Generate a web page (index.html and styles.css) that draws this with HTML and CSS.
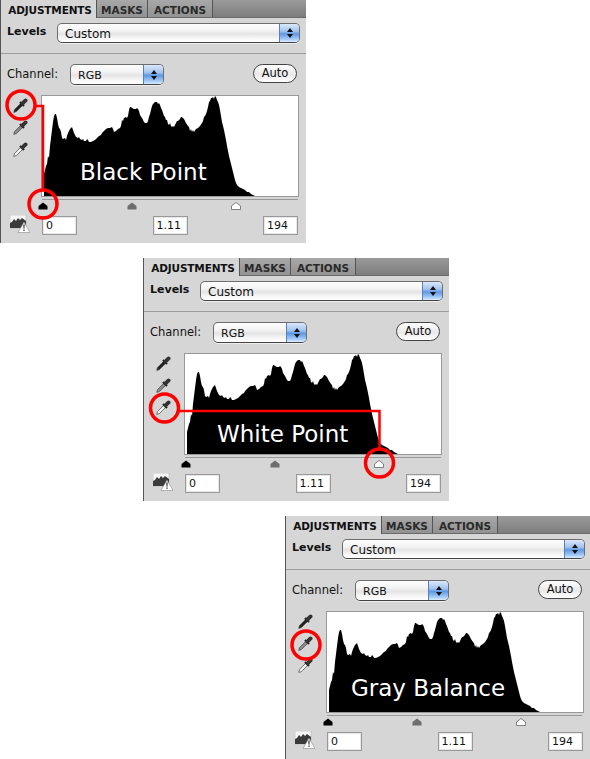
FILE: index.html
```html
<!DOCTYPE html>
<html lang="en">
<head>
<meta charset="utf-8">
<title>Levels</title>
<link rel="stylesheet" href="styles.css">
</head>
<body>
<svg class="defs" width="0" height="0">
  <defs>
    <symbol id="histo" viewBox="0 0 256 100">
      <polygon points="0,100 2,100 2,78 4,70 5,68 6,60 7,62 8,50 9,42 10,34 11,26 12,20 13,18 14,18 15,22 16,28 17,32 18,33 19,36 20,42 21,43 23,42 24,44 25,40 26,37 28,33 30,31 31,34 32,37 34,41 36,42 37,41 38,43 40,44 41,43 42,45 44,45 45,43 46,44 47,46 49,46 51,45 53,44 55,42 57,40 59,39 60,37 62,35 64,33 66,32 68,32 70,31 71,33 72,36 74,35 76,33 78,32 79,30 80,24 81,25 82,22 84,21 85,22 86,20 87,14 88,11 89,11 90,12 92,13 94,13 95,12 96,13 97,15 98,19 100,22 101,24 102,26 103,27 105,27 106,25 107,21 108,18 109,14 110,10 111,8 112,7 113,6 114,6 115,6 116,8 117,7 118,9 119,12 120,14 121,17 122,20 123,21 124,24 125,24 126,28 127,29 128,27 129,30 130,31 131,30 132,31 133,29 134,27 135,25 136,25 137,24 138,23 139,21 140,21 141,22 142,23 143,25 144,27 146,30 147,31 148,35 149,33 150,36 151,34 152,36 154,33 156,32 158,30 160,27 161,25 162,21 163,20 164,18 165,15 166,11 167,6 168,5 169,2 170,2 171,1 172,3 173,0 174,1 175,4 176,6 177,9 178,14 179,20 180,26 181,30 182,34 183,39 184,44 185,50 186,55 187,60 188,64 189,68 190,72 191,76 192,80 193,84 194,87 195,89 197,91 199,92 201,93 203,94 205,96 207,96 209,98 211,99 213,100"/>
    </symbol>
    <symbol id="dropper" viewBox="0 0 15 15">
      <path d="M8.300 4.700L10.300 6.700 3.400 13.600 .8 14.400 1.400 11.700z" fill="currentColor" stroke="#444" stroke-width=".7"/>
      <path d="M7 4L11 8" fill="none" stroke="#222" stroke-width="2.200"/>
      <path d="M9.800 5.200L12.600 2.400" fill="none" stroke="#333" stroke-width="3.800" stroke-linecap="round"/>
    </symbol>
    <symbol id="warn" viewBox="0 0 20 18">
      <rect x="0" y="0" width="16" height="13" fill="#f6f6f6" stroke="#aaa" stroke-width=".5"/>
      <path d="M0 13V8l2-1 2-3 2 2 2-3 2 2 2-2 4 3v7z" fill="#3a3a3a"/>
      <path d="M14 7L20 17.500H8z" fill="#fff" stroke="#888" stroke-width=".6"/>
      <path d="M13.400 9.500h1.200l-.2 4.300h-.8zM13.400 14.600h1.200v1.200h-1.200z" fill="#111"/>
    </symbol>
  </defs>
</svg>

<section class="panel panel-first">
  <div class="tabs">
    <span class="tab tab-active">ADJUSTMENTS</span>
    <span class="tab tab-masks">MASKS</span>
    <span class="tab tab-actions">ACTIONS</span>
  </div>
  <div class="preset-row">
    <span class="levels-title">Levels</span>
    <div class="popup popup-wide"><span class="popup-text">Custom</span><span class="stepper"><i class="up"></i><i class="down"></i></span></div>
  </div>
  <div class="rule"></div>
  <div class="channel-row">
    <span class="channel-label">Channel:</span>
    <div class="popup popup-small"><span class="popup-text popup-rgb">RGB</span><span class="stepper"><i class="up"></i><i class="down"></i></span></div>
    <span class="auto">Auto</span>
  </div>
  <div class="graph-row">
    <div class="droppers">
      <svg class="dropper tip-black"><use href="#dropper"/></svg>
      <svg class="dropper tip-gray"><use href="#dropper"/></svg>
      <svg class="dropper tip-white"><use href="#dropper"/></svg>
    </div>
    <div class="graph">
      <svg class="histogram"><use href="#histo"/></svg>
      <span class="caption caption-black">Black Point</span>
    </div>
  </div>
  <div class="slider">
    <svg class="thumb thumb-black" viewBox="0 0 10 8"><path d="M5 .5L9.500 4v3.500H.5V4z"/></svg>
    <svg class="thumb thumb-gray" viewBox="0 0 10 8"><path d="M5 .5L9.500 4v3.500H.5V4z"/></svg>
    <svg class="thumb thumb-white" viewBox="0 0 10 8"><path d="M5 .5L9.500 4v3.500H.5V4z"/></svg>
  </div>
  <div class="input-row">
    <svg class="warning"><use href="#warn"/></svg>
    <div class="inputs"><span class="field">0</span><span class="field">1.11</span><span class="field">194</span></div>
  </div>
  <svg class="marks"><path d="M36 106H43V190"/><circle cx="21" cy="105" r="14"/><circle cx="43" cy="204" r="14"/></svg>
</section>

<section class="panel panel-second">
  <div class="tabs">
    <span class="tab tab-active">ADJUSTMENTS</span>
    <span class="tab tab-masks">MASKS</span>
    <span class="tab tab-actions">ACTIONS</span>
  </div>
  <div class="preset-row">
    <span class="levels-title">Levels</span>
    <div class="popup popup-wide"><span class="popup-text">Custom</span><span class="stepper"><i class="up"></i><i class="down"></i></span></div>
  </div>
  <div class="rule"></div>
  <div class="channel-row">
    <span class="channel-label">Channel:</span>
    <div class="popup popup-small"><span class="popup-text popup-rgb">RGB</span><span class="stepper"><i class="up"></i><i class="down"></i></span></div>
    <span class="auto">Auto</span>
  </div>
  <div class="graph-row">
    <div class="droppers">
      <svg class="dropper tip-black"><use href="#dropper"/></svg>
      <svg class="dropper tip-gray"><use href="#dropper"/></svg>
      <svg class="dropper tip-white"><use href="#dropper"/></svg>
    </div>
    <div class="graph">
      <svg class="histogram"><use href="#histo"/></svg>
      <span class="caption caption-white">White Point</span>
    </div>
  </div>
  <div class="slider">
    <svg class="thumb thumb-black" viewBox="0 0 10 8"><path d="M5 .5L9.500 4v3.500H.5V4z"/></svg>
    <svg class="thumb thumb-gray" viewBox="0 0 10 8"><path d="M5 .5L9.500 4v3.500H.5V4z"/></svg>
    <svg class="thumb thumb-white" viewBox="0 0 10 8"><path d="M5 .5L9.500 4v3.500H.5V4z"/></svg>
  </div>
  <div class="input-row">
    <svg class="warning"><use href="#warn"/></svg>
    <div class="inputs"><span class="field">0</span><span class="field">1.11</span><span class="field">194</span></div>
  </div>
  <svg class="marks"><path d="M36 153H236.500V190"/><circle cx="21.500" cy="150" r="14"/><circle cx="236.500" cy="205" r="14"/></svg>
</section>

<section class="panel panel-third">
  <div class="tabs">
    <span class="tab tab-active">ADJUSTMENTS</span>
    <span class="tab tab-masks">MASKS</span>
    <span class="tab tab-actions">ACTIONS</span>
  </div>
  <div class="preset-row">
    <span class="levels-title">Levels</span>
    <div class="popup popup-wide"><span class="popup-text">Custom</span><span class="stepper"><i class="up"></i><i class="down"></i></span></div>
  </div>
  <div class="rule"></div>
  <div class="channel-row">
    <span class="channel-label">Channel:</span>
    <div class="popup popup-small"><span class="popup-text popup-rgb">RGB</span><span class="stepper"><i class="up"></i><i class="down"></i></span></div>
    <span class="auto">Auto</span>
  </div>
  <div class="graph-row">
    <div class="droppers">
      <svg class="dropper tip-black"><use href="#dropper"/></svg>
      <svg class="dropper tip-gray"><use href="#dropper"/></svg>
      <svg class="dropper tip-white"><use href="#dropper"/></svg>
    </div>
    <div class="graph">
      <svg class="histogram"><use href="#histo"/></svg>
      <span class="caption caption-gray">Gray Balance</span>
    </div>
  </div>
  <div class="slider">
    <svg class="thumb thumb-black" viewBox="0 0 10 8"><path d="M5 .5L9.500 4v3.500H.5V4z"/></svg>
    <svg class="thumb thumb-gray" viewBox="0 0 10 8"><path d="M5 .5L9.500 4v3.500H.5V4z"/></svg>
    <svg class="thumb thumb-white" viewBox="0 0 10 8"><path d="M5 .5L9.500 4v3.500H.5V4z"/></svg>
  </div>
  <div class="input-row">
    <svg class="warning"><use href="#warn"/></svg>
    <div class="inputs"><span class="field">0</span><span class="field">1.11</span><span class="field">194</span></div>
  </div>
  <svg class="marks"><circle cx="21" cy="129" r="14"/></svg>
</section>
</body>
</html>
```
FILE: styles.css
```css
* { box-sizing: border-box; }
html, body { margin: 0; padding: 0; background: #fff; overflow: hidden; }
body { font-family: "DejaVu Sans", sans-serif; color: #111; width: 590px; height: 759px; }
.defs { position: absolute; }

.panel {
  position: relative;
  width: 306px;
  height: 243px;
  margin-top: 15px;
  background: #d6d6d6;
  border-left: 1px solid #555;
}
.panel-first { margin-top: 0; }
.panel-second { margin-left: 143px; }
.panel-third { margin-left: 285px; width: 305px; }

.tabs {
  display: flex;
  height: 18px;
  background: linear-gradient(#9a9a9a, #7d7d7d);
  border-bottom: 1px solid #6a6a6a;
}
.tab {
  display: flex;
  align-items: center;
  justify-content: center;
  height: 17px;
  padding-top: 2px;
  font-size: 10.500px;
  font-weight: bold;
  color: #2a2a2a;
  border-right: 1px solid #555;
  background: linear-gradient(#a8a8a8, #929292);
}
.tab-active { width: 96px; padding-left: 3px; background: #d6d6d6; height: 18px; color: #111; letter-spacing: -.15px; }
.tab-masks { width: 51px; }
.tab-actions { width: 65px; }

.preset-row {
  display: flex;
  align-items: center;
  height: 20px;
  margin-top: 5px;
  padding-left: 6px;
}
.levels-title { width: 50px; font-size: 11px; font-weight: bold; margin-top: -4px; }

.popup {
  display: flex;
  height: 20px;
  border: 1px solid #6d6d6d;
  border-bottom-color: #444;
  border-radius: 5px;
  overflow: hidden;
  background: linear-gradient(#fdfdfd 0, #f4f4f4 35%, #e4e4e4 55%, #f7f7f7 80%, #fff 100%);
  box-shadow: 0 1px 0 #eee;
}
.popup-wide { width: 243px; }
.popup-small { width: 94px; height: 21px; }
.popup-text { flex: 1; padding-left: 7px; font-size: 12px; line-height: 20px; }
.popup-rgb { font-size: 11px; line-height: 21px; }
.stepper {
  display: flex;
  flex-direction: column;
  align-items: center;
  justify-content: center;
  gap: 2px;
  width: 20px;
  border-left: 1px solid #5a7fb5;
  background: linear-gradient(#dbe8fa 0, #a3c3ef 40%, #5e98e4 55%, #a6ccf7 85%, #dcedff 100%);
}
.up, .down { width: 0; height: 0; border-left: 3px solid transparent; border-right: 3px solid transparent; }
.up { border-bottom: 4px solid #111; }
.down { border-top: 4px solid #111; }

.rule { height: 1px; margin-top: 10px; background: #9c9c9c; }

.channel-row {
  position: relative;
  display: flex;
  align-items: flex-start;
  height: 21px;
  margin-top: 10px;
  padding-left: 6px;
}
.channel-label { width: 63px; font-size: 11.500px; line-height: 21px; }
.auto {
  width: 44px;
  height: 19px;
  margin-left: 89px;
  border: 1px solid #444;
  border-radius: 10px;
  background: linear-gradient(#fefefe, #e9e9e9 55%, #fff);
  font-size: 11.500px;
  line-height: 16px;
  text-align: center;
}

.graph-row { display: flex; margin-top: 10px; height: 103px; }
.droppers {
  display: flex;
  flex-direction: column;
  gap: 7px;
  width: 40px;
  padding: 3px 0 0 12px;
}
.dropper { width: 15px; height: 15px; }
.tip-black { color: #222; }
.tip-gray { color: #8a8a8a; }
.tip-white { color: #f4f4f4; }

.graph {
  position: relative;
  width: 258px;
  height: 102px;
  background: #fff;
  border: 1px solid #999;
}
.histogram { display: block; width: 256px; height: 100px; }
.histogram polygon { fill: #000; }
.caption {
  position: absolute;
  top: 61px;
  font-size: 23px;
  line-height: 30px;
  color: #fff;
  white-space: nowrap;
}
.caption-black { left: 38px; }
.caption-white { left: 32px; top: 65px; }
.caption-gray { left: 24px; }

.slider {
  position: relative;
  height: 10px;
  margin: 1px 8px 0 41px;
  border-top: 1px solid #999;
}
.thumb { position: absolute; top: 2px; width: 10px; height: 8px; }
.thumb-black { left: -4px; fill: #000; }
.thumb-gray { left: 85px; fill: #6e6e6e; }
.thumb-white { left: 189px; fill: #fff; stroke: #666; stroke-width: .8; }

.input-row { display: flex; margin-top: 6px; padding-left: 9px; }
.warning { width: 20px; height: 18px; margin-right: 12px; }
.inputs { display: flex; justify-content: space-between; width: 256px; margin-top: 1px; }
.field {
  width: 35px;
  height: 19px;
  padding-left: 3px;
  border: 1px solid #999;
  box-shadow: inset 0 0 0 1px #e8e8e8;
  background: #fff;
  font-size: 11px;
  line-height: 17px;
}

.marks { position: absolute; left: -1px; top: 0; width: 100%; height: 100%; overflow: visible; pointer-events: none; }
.marks path, .marks circle { fill: none; stroke: #f00; }
.marks path { stroke-width: 2.500px; }
.marks circle { stroke-width: 3.500px; }
```
